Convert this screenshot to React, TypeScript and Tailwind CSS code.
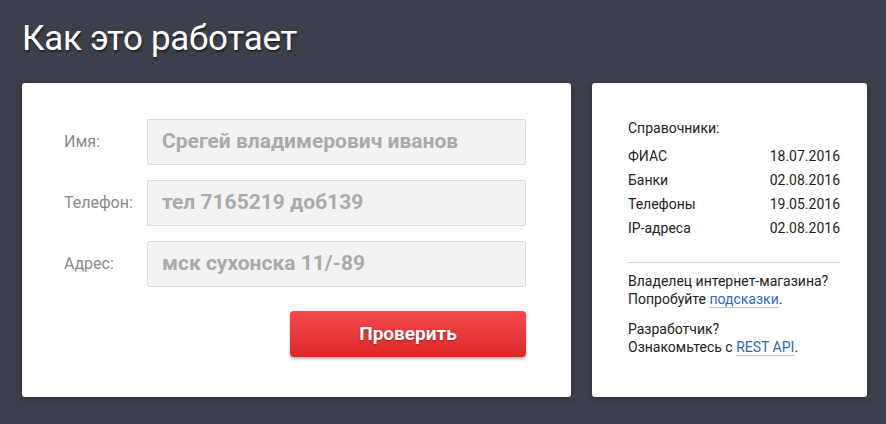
const fields = [
  { label: 'Имя:', value: 'Срегей владимерович иванов' },
  { label: 'Телефон:', value: 'тел 7165219 доб139' },
  { label: 'Адрес:', value: 'мск сухонска 11/-89' },
]

const refs = [
  { name: 'ФИАС', date: '18.07.2016' },
  { name: 'Банки', date: '02.08.2016' },
  { name: 'Телефоны', date: '19.05.2016' },
  { name: 'IP-адреса', date: '02.08.2016' },
]

export default function App() {
  return (
    <div className="w-[886px] h-[424px] bg-[#3d404b] pl-[22px] pt-[18px] font-['Roboto',sans-serif] overflow-hidden">
      <h1 className="text-[35px] leading-[42px] text-white font-normal tracking-[-0.3px] [text-shadow:1px_2px_2px_rgba(0,0,0,0.5)]">
        Как это работает
      </h1>

      <div className="flex gap-[21px] mt-[23px]">
        {/* форма */}
        <div className="shrink-0 w-[549px] h-[314px] bg-white rounded-[3px] shadow-[0_2px_6px_rgba(0,0,0,0.35)] pt-[36px] pl-[42px]">
          <div className="flex flex-col gap-[15px]">
            {fields.map((f) => (
              <div key={f.label} className="flex items-center">
                <div className="w-[83px] text-[16px] text-[#8a8a8a]">{f.label}</div>
                <div className="w-[379px] h-[46px] bg-[#f3f3f3] border border-[#dcdcdc] rounded-[2px] flex items-center px-[14px] text-[21px] font-bold text-[#aaaaaa]">
                  {f.value}
                </div>
              </div>
            ))}
          </div>
          <div className="flex justify-end w-[462px] mt-[24px]">
            <button className="w-[236px] h-[46px] rounded-[4px] bg-gradient-to-b from-[#f24a4c] to-[#de2629] shadow-[0_2px_3px_rgba(0,0,0,0.3)] text-white text-[19px] font-bold [text-shadow:0_1px_2px_rgba(0,0,0,0.4)]">
              Проверить
            </button>
          </div>
        </div>

        {/* справочники */}
        <div className="shrink-0 w-[275px] h-[314px] bg-white rounded-[3px] shadow-[0_2px_6px_rgba(0,0,0,0.35)] pt-[36px] pl-[36px] pr-[27px] text-[14px] text-[#222] leading-[18px]">
          <div>Справочники:</div>
          <div className="mt-[10px] flex flex-col gap-[6px]">
            {refs.map((r) => (
              <div key={r.name} className="flex justify-between">
                <span>{r.name}</span>
                <span>{r.date}</span>
              </div>
            ))}
          </div>
          <div className="border-t border-[#d4d4d4] mt-[25px] pt-[9px]">
            <p>Владелец интернет-магазина?</p>
            <p>
              Попробуйте{' '}
              <a className="text-[#2f6bb5] border-b border-[#a9c4e6]">подсказки</a>.
            </p>
            <p className="mt-[12px]">Разработчик?</p>
            <p>
              Ознакомьтесь с{' '}
              <a className="text-[#2f6bb5] border-b border-[#a9c4e6]">REST API</a>.
            </p>
          </div>
        </div>
      </div>
    </div>
  )
}
